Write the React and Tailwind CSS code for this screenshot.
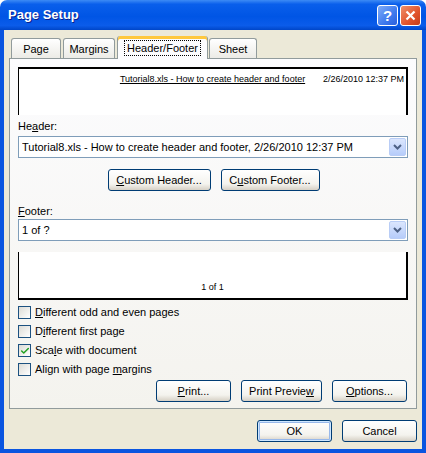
import { Check } from "lucide-react";

function XpButton({ children, className = "", isDefault = false }) {
  return (
    <button
      className={
        "h-[22px] w-[75px] rounded-[3px] border border-[#003C74] bg-[linear-gradient(to_bottom,#FFFFFF,#F4F3EE_70%,#D6D0C5)] text-[11px] text-black leading-none " +
        (isDefault ? "shadow-[inset_0_0_0_1px_#CEE7FF,inset_0_0_0_2px_#98B8EA] " : "") +
        className
      }
    >
      {children}
    </button>
  );
}

function Combo({ text }) {
  return (
    <div className="flex h-[22px] w-[390px] items-center border border-[#7F9DB9] bg-white pl-[3px] pr-[1px]">
      <span className="flex-1 truncate text-[11px] text-black">{text}</span>
      <div className="flex h-[18px] w-[17px] items-center justify-center rounded-[2px] border border-[#B9CDF6] bg-[linear-gradient(to_bottom,#DBE6FD,#B6CCFA)]">
        <svg width="9" height="6" viewBox="0 0 9 6">
          <path d="M1 1 L4.5 4.5 L8 1" stroke="#4D6185" strokeWidth="2" fill="none" />
        </svg>
      </div>
    </div>
  );
}

function CheckRow({ checked, children }) {
  return (
    <div className="flex h-[19px] items-center">
      <div className="flex h-[13px] w-[13px] items-center justify-center border border-[#1C5180] bg-[linear-gradient(135deg,#DCDBD5,#FFFFFF)]">
        {checked && <Check size={10} strokeWidth={3.5} color="#21A121" />}
      </div>
      <span className="ml-[4px] text-[11px] text-black">{children}</span>
    </div>
  );
}

function Tab({ children, active = false, className = "" }) {
  if (active) {
    return (
      <div
        className={
          "relative z-10 -mb-px flex h-[23px] items-start justify-center rounded-t-[3px] border-x border-[#919B9C] bg-[#FCFCFE] pt-[3px] shadow-[inset_0_3px_0_#FFC83C] " +
          className
        }
      >
        <span className="mt-[1px] border border-dotted border-black px-[2px] text-[11px] leading-[14px] text-black">
          {children}
        </span>
      </div>
    );
  }
  return (
    <div
      className={
        "flex h-[20px] items-center justify-center rounded-t-[3px] border-x border-t border-[#919B9C] bg-[linear-gradient(to_bottom,#FFFFFF,#ECEBE6)] pt-[1px] text-[11px] text-black " +
        className
      }
    >
      {children}
    </div>
  );
}

export default function App() {
  return (
    <div className="h-[453px] w-[426px] overflow-hidden bg-white font-['Liberation_Sans',Arial,sans-serif]">
      {/* title bar */}
      <div className="flex h-[30px] items-center rounded-t-[7px] bg-[linear-gradient(to_bottom,#3D8BF5,#0A5FEB_14%,#0055E5_55%,#0B5CEA_85%,#0046C8)] pl-[8px] pr-[5px]">
        <span className="flex-1 text-[13px] font-bold text-white [text-shadow:1px_1px_0_#0A1E8C]">
          Page Setup
        </span>
        <div className="flex h-[21px] w-[21px] items-center justify-center rounded-[3px] border border-white bg-[linear-gradient(135deg,#7FACF8,#3F7AEE_60%,#2A5FDC)] text-[15px] font-bold leading-none text-white">
          ?
        </div>
        <div className="ml-[2px] flex h-[21px] w-[21px] items-center justify-center rounded-[3px] border border-white bg-[linear-gradient(135deg,#F0906A,#E0532C_60%,#C63D1A)]">
          <svg width="11" height="11" viewBox="0 0 11 11">
            <path d="M1.5 1.5 L9.5 9.5 M9.5 1.5 L1.5 9.5" stroke="white" strokeWidth="2.2" />
          </svg>
        </div>
      </div>

      {/* body */}
      <div className="h-[423px] border-x-4 border-b-4 border-[#0A55E0] bg-[#ECE9D8] pl-[5px] pt-[5px]">
        {/* tabs */}
        <div className="flex h-[23px] items-end pl-[2px]">
          <Tab className="w-[50px]">Page</Tab>
          <Tab className="ml-[2px] w-[52px]">Margins</Tab>
          <Tab active className="ml-[2px] w-[91px]">
            Header/Footer
          </Tab>
          <Tab className="ml-px w-[48px]">Sheet</Tab>
        </div>

        {/* panel */}
        <div className="flex h-[351px] w-[408px] flex-col border border-[#919B9C] bg-[linear-gradient(to_bottom,#FCFCFE,#F4F3EE)] px-[8px] pt-[8px]">
          {/* header preview */}
          <div className="flex h-[48px] w-[390px] border-l border-r-2 border-t-2 border-black bg-white px-[2px] pt-[5px]">
            <div className="flex-1" />
            <span className="text-[9px] leading-[11px] text-black underline">
              Tutorial8.xls - How to create header and footer
            </span>
            <div className="flex flex-1 justify-end">
              <span className="text-[9px] leading-[11px] text-black">2/26/2010 12:37 PM</span>
            </div>
          </div>

          <div className="mt-[5px] h-[13px] text-[11px] leading-[13px] text-black">
            He<u>a</u>der:
          </div>
          <div className="mt-[3px]">
            <Combo text="Tutorial8.xls - How to create header and footer, 2/26/2010 12:37 PM" />
          </div>

          <div className="mt-[11px] flex justify-center gap-[10px] pl-[1px]">
            <XpButton className="w-[103px]">
              <u>C</u>ustom Header...
            </XpButton>
            <XpButton className="w-[99px]">
              C<u>u</u>stom Footer...
            </XpButton>
          </div>

          <div className="mt-[14px] h-[13px] text-[11px] leading-[13px] text-black">
            <u>F</u>ooter:
          </div>
          <div className="mt-px">
            <Combo text="1 of ?" />
          </div>

          {/* footer preview */}
          <div className="mt-[11px] flex h-[48px] w-[390px] items-end justify-center border-b-2 border-l border-r-2 border-black bg-white pb-[5px]">
            <span className="text-[9px] leading-[11px] text-black">1 of 1</span>
          </div>

          <div className="mt-[3px] flex flex-col">
            <CheckRow>
              <u>D</u>ifferent odd and even pages
            </CheckRow>
            <CheckRow>
              D<u>i</u>fferent first page
            </CheckRow>
            <CheckRow checked>
              Sca<u>l</u>e with document
            </CheckRow>
            <CheckRow>
              Align with page <u>m</u>argins
            </CheckRow>
          </div>

          <div className="mt-px flex justify-end gap-[10px] pr-[1px]">
            <XpButton className="w-[74px]">
              <u>P</u>rint...
            </XpButton>
            <XpButton className="w-[81px]">
              Print Previe<u>w</u>
            </XpButton>
            <XpButton className="w-[74px]">
              <u>O</u>ptions...
            </XpButton>
          </div>
        </div>

        {/* dialog buttons */}
        <div className="mt-[11px] flex justify-end gap-[10px] pr-[5px]">
          <XpButton isDefault>OK</XpButton>
          <XpButton>Cancel</XpButton>
        </div>
      </div>
    </div>
  );
}
